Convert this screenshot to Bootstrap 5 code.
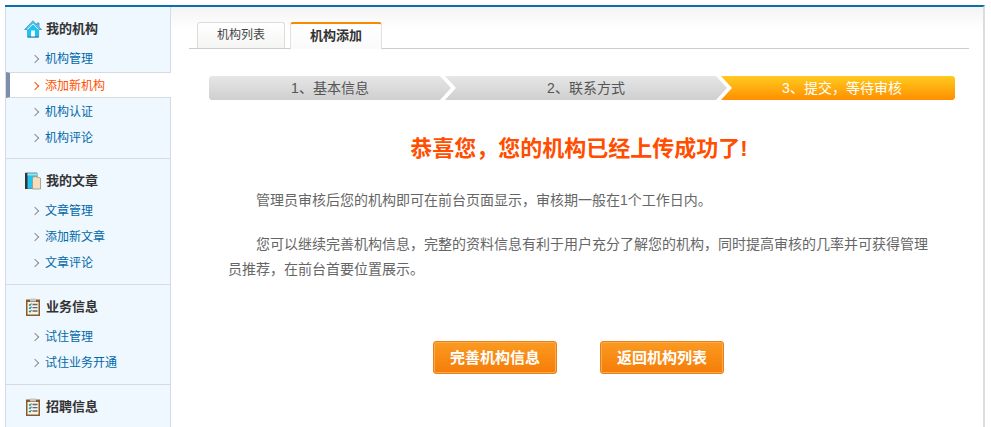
<!DOCTYPE html>
<html lang="zh-CN">
<head>
<meta charset="utf-8">
<title>机构添加</title>
<link href="https://cdn.jsdelivr.net/npm/bootstrap@5.3.0/dist/css/bootstrap.min.css" rel="stylesheet">
<style>
html,body{height:427px;overflow:hidden;background:#fff}
body{font-family:"Liberation Sans","Noto Sans CJK SC",sans-serif;font-size:12px;color:#666;padding:5px 0 0 5px}
.frame{width:980px;height:422px;border-top:2px solid #0b6fad;border-right:2px solid #dcdcdc;overflow:hidden}
.side{width:166px;flex:none;background:#eff7ff;border-left:1px solid #d5dbe3;border-right:1px solid #d5dbe3}
.side-sec{border-bottom:1px solid #d5dbe3;padding:0 0 9px}
.side-sec.after-on{padding-bottom:8px}
.side-title{height:38px;padding:5px 0 0 18px;font-weight:700;font-size:13px;color:#333;gap:4px;margin:0}
.side-title svg{width:18px;height:18px;flex:none}
.side-link{display:block;height:26px;line-height:29px;padding-left:39px;color:#0069a8;text-decoration:none;font-size:12px;position:relative}
.side-link::before{content:"";position:absolute;left:26px;top:11px;width:6px;height:6px;border-top:1px solid #8a8f96;border-right:1px solid #8a8f96;transform:rotate(45deg)}
.side-link.on{color:#ff5000;background:#fff;border-top:1px solid #d5dbe3;border-bottom:1px solid #d5dbe3;line-height:27px;margin-right:-1px;border-left:4px solid #7d8ea8;padding-left:35px}
.side-link.on::before{border-color:#ff5000;left:22px;top:10px}
.first-gap{height:65px}
.main-pane{width:814px;flex:none;background:linear-gradient(#f4f4f4,#fff 22px);padding:15px 15px 0 18px}
.tab-strip{height:27px;border-bottom:1px solid #ccc;padding-left:8px;gap:5px;flex-wrap:nowrap;width:780px;--bs-nav-tabs-border-width:0}
.tab-strip .nav-link{height:27px;padding:0;line-height:25px;text-align:center;color:#444;font-size:12px;background:linear-gradient(#fff,#f5f5f3);border:1px solid #dcdcdc;border-bottom:1px solid #ccc;border-radius:3px 3px 0 0;margin:0}
.tab-a{width:88px}
.tab-b{width:92px}
.tab-strip .nav-link.active{height:28px;font-size:13px;font-weight:700;color:#333;border-top:2px solid #f78a00;border-bottom:1px solid #fff;background:linear-gradient(#fff,#fafafa);line-height:24px}
.steps{margin:27px 0 0 20px;width:746px}
.stp{height:24px;line-height:24px;font-size:14px;text-align:center;color:#555}
.stp1{width:242px;background:linear-gradient(#e6e6e6,#cfcfcf);clip-path:polygon(0 2px,2px 0,231px 0,242px 12px,231px 24px,2px 24px,0 22px)}
.stp2{width:282px;margin-left:-6px;background:linear-gradient(#e6e6e6,#cfcfcf);clip-path:polygon(0 0,271px 0,282px 12px,271px 24px,0 24px,11px 12px)}
.stp3{width:234px;margin-left:-6px;background:linear-gradient(#ffcb1f,#ff8f00);color:#fff;padding-left:8px;clip-path:polygon(0 0,232px 0,234px 2px,234px 22px,232px 24px,0 24px,11px 12px)}
.done-title{font-size:22px;font-weight:700;color:#ff4e00;margin:33px 0 0 20px;line-height:32px;width:740px}
.note{font-size:14px;line-height:25px;color:#666;margin:0 0 0 39px;width:710px;text-indent:28px}
.note-a{margin-top:23px}
.note-b{margin-top:19px}
.act-row{gap:43px;margin:59px 0 0 244px}
.act-btn{width:124px;height:33px;padding:0;font-size:15px;font-weight:700;line-height:31px;color:#fff;border:1px solid #e8801a;border-radius:3px;background:linear-gradient(#fb9a20,#f57d0a);box-shadow:inset 0 0 0 1px #fbaa4c}
.act-btn:hover{color:#fff}
</style>
</head>
<body>
<div class="frame d-flex">
  <aside class="side">
    <div class="first-gap">
      <h6 class="side-title d-flex align-items-center">
        <svg viewBox="0 0 18 18"><path d="M9 .8 .6 9.500h3V17h11V9.500h3L15 7V3h-2v2Z" fill="#5fc0e6" stroke="#2f8fb5" stroke-width=".7"/><path d="M3.600 9.500 9 4l5.400 5.500V17H3.600Z" fill="#19c3f5"/><path d="M3.600 9.500 9 4l5.400 5.500" fill="none" stroke="#d8f4ff"/><path d="M7 10.500h4V17H7Z" fill="#fff"/><path d="M3.600 17h11" stroke="#1478a8"/></svg>
        我的机构
      </h6>
      <a class="side-link" href="#">机构管理</a>
    </div>
    <a class="side-link on" href="#">添加新机构</a>
    <div class="side-sec after-on">
      <a class="side-link" href="#">机构认证</a>
      <a class="side-link" href="#">机构评论</a>
    </div>
    <div class="side-sec">
      <h6 class="side-title d-flex align-items-center">
        <svg viewBox="0 0 18 18"><path d="M1.500 1h11.500v15.500H1.500Z" fill="#22c4f0" stroke="#5f8f9c"/><path d="M1 1h2.500v16H1Z" fill="#333"/><path d="M3.500 1.500h9.500v2H3.500Z" fill="#9adfe8"/><path d="M8.500 5.500 11 4.500l5.500 1.500v11h-8Z" fill="#fbdcb8" stroke="#8a9a90" stroke-width=".8"/></svg>
        我的文章
      </h6>
      <a class="side-link" href="#">文章管理</a>
      <a class="side-link" href="#">添加新文章</a>
      <a class="side-link" href="#">文章评论</a>
    </div>
    <div class="side-sec">
      <h6 class="side-title d-flex align-items-center">
        <svg viewBox="0 0 18 18"><path d="M2 1.500h14V18H2Z" fill="#8a5a2b"/><path d="M3.500 4h11v12.500h-11Z" fill="#f4f4ee"/><path d="M6 .5h6V3.500H6Z" fill="#c9c9c0"/><path d="M8.500 6.500h5M8.500 9.700h5M8.500 13h5" stroke="#666" stroke-width="1.300"/><path d="M5 6.500 6 7.500 7.500 5.500M5 9.700 6 10.700 7.500 8.700M5 13 6 14 7.500 12" fill="none" stroke="#1f8a7a" stroke-width="1.100"/></svg>
        业务信息
      </h6>
      <a class="side-link" href="#">试住管理</a>
      <a class="side-link" href="#">试住业务开通</a>
    </div>
    <div>
      <h6 class="side-title d-flex align-items-center">
        <svg viewBox="0 0 18 18"><path d="M2 1.500h14V18H2Z" fill="#8a5a2b"/><path d="M3.500 4h11v12.500h-11Z" fill="#f4f4ee"/><path d="M6 .5h6V3.500H6Z" fill="#c9c9c0"/><path d="M8.500 6.500h5M8.500 9.700h5M8.500 13h5" stroke="#666" stroke-width="1.300"/><path d="M5 6.500 6 7.500 7.500 5.500M5 9.700 6 10.700 7.500 8.700M5 13 6 14 7.500 12" fill="none" stroke="#1f8a7a" stroke-width="1.100"/></svg>
        招聘信息
      </h6>
    </div>
  </aside>
  <main class="main-pane">
    <ul class="nav nav-tabs tab-strip">
      <li class="nav-item"><a class="nav-link tab-a" href="#">机构列表</a></li>
      <li class="nav-item"><a class="nav-link tab-b active" href="#">机构添加</a></li>
    </ul>
    <div class="steps d-flex">
      <div class="stp stp1">1、基本信息</div>
      <div class="stp stp2">2、联系方式</div>
      <div class="stp stp3">3、提交，等待审核</div>
    </div>
    <h2 class="done-title text-center">恭喜您，您的机构已经上传成功了!</h2>
    <p class="note note-a">管理员审核后您的机构即可在前台页面显示，审核期一般在1个工作日内。</p>
    <p class="note note-b">您可以继续完善机构信息，完整的资料信息有利于用户充分了解您的机构，同时提高审核的几率并可获得管理员推荐，在前台首要位置展示。</p>
    <div class="act-row d-flex">
      <a class="btn act-btn" href="#">完善机构信息</a>
      <a class="btn act-btn" href="#">返回机构列表</a>
    </div>
  </main>
</div>
</body>
</html>
